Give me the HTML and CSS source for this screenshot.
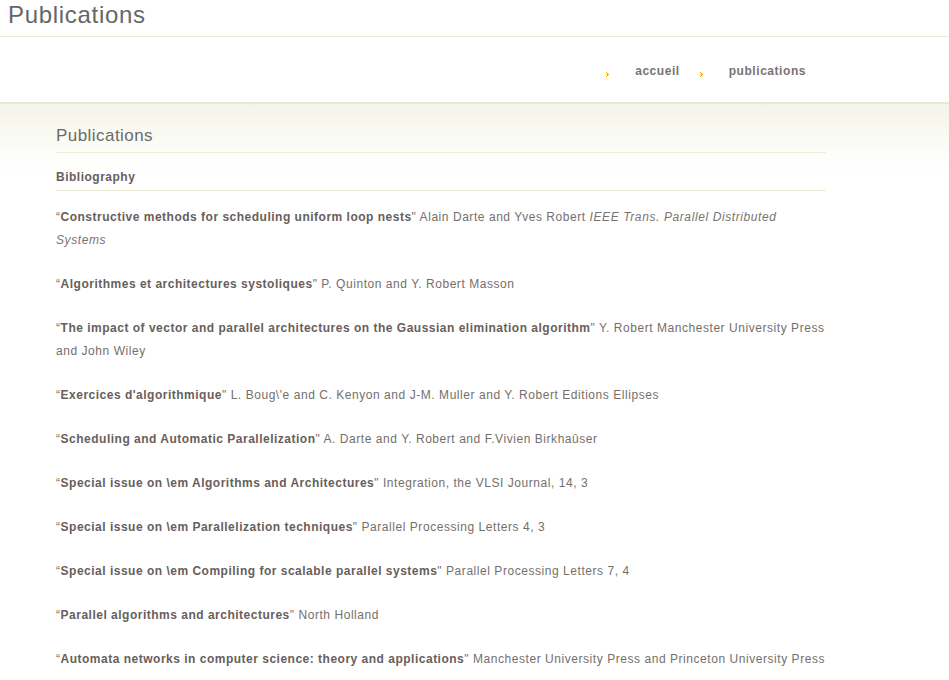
FILE: index.html
```html
<!DOCTYPE html>
<html lang="fr">
<head>
<meta charset="utf-8">
<title>Publications</title>
<link rel="stylesheet" href="styles.css">
</head>
<body>
<header class="site-header">
  <h1 class="site-title">Publications</h1>
</header>
<nav class="menu-bar">
  <ul class="menu">
    <li class="menu-item"><svg class="bullet" width="3" height="5" viewBox="0 0 3 5" shape-rendering="crispEdges"><path d="M0 0h1v1h1v1h1v1h-1v1h-1v1h-1v-1h1v-1h-1v-1h1v-1h-1z" fill="#f5a800"/><path d="M0 2h1v1h-1z" fill="#fcd870"/></svg><a href="#" class="menu-link">accueil</a></li>
    <li class="menu-item"><svg class="bullet" width="3" height="5" viewBox="0 0 3 5" shape-rendering="crispEdges"><path d="M0 0h1v1h1v1h1v1h-1v1h-1v1h-1v-1h1v-1h-1v-1h1v-1h-1z" fill="#f5a800"/><path d="M0 2h1v1h-1z" fill="#fcd870"/></svg><a href="#" class="menu-link">publications</a></li>
  </ul>
</nav>
<main class="main">
  <div class="content">
    <h2 class="page-title">Publications</h2>
    <h3 class="section-title">Bibliography</h3>
    <p class="entry">“<b>Constructive methods for scheduling uniform loop nests</b>" Alain Darte and Yves Robert <i>IEEE Trans. Parallel Distributed Systems</i></p>
    <p class="entry">“<b>Algorithmes et architectures systoliques</b>" P. Quinton and Y. Robert Masson</p>
    <p class="entry">“<b>The impact of vector and parallel architectures on the Gaussian elimination algorithm</b>" Y. Robert Manchester University Press and John Wiley</p>
    <p class="entry">“<b>Exercices d'algorithmique</b>" L. Boug\'e and C. Kenyon and J-M. Muller and Y. Robert Editions Ellipses</p>
    <p class="entry">“<b>Scheduling and Automatic Parallelization</b>" A. Darte and Y. Robert and F.Vivien Birkhaûser</p>
    <p class="entry">“<b>Special issue on \em Algorithms and Architectures</b>" Integration, the VLSI Journal, 14, 3</p>
    <p class="entry">“<b>Special issue on \em Parallelization techniques</b>" Parallel Processing Letters 4, 3</p>
    <p class="entry">“<b>Special issue on \em Compiling for scalable parallel systems</b>" Parallel Processing Letters 7, 4</p>
    <p class="entry">“<b>Parallel algorithms and architectures</b>" North Holland</p>
    <p class="entry">“<b>Automata networks in computer science: theory and applications</b>" Manchester University Press and Princeton University Press</p>
  </div>
</main>
</body>
</html>
```

FILE: styles.css
```css
html, body {
  margin: 0;
  padding: 0;
  background: #fff;
}
body {
  font-family: "Liberation Sans", Arial, sans-serif;
  color: #756f6b;
}
.site-header {
  border-bottom: 1px solid #efead6;
  height: 36px;
}
.site-title {
  margin: 0;
  padding: 1px 8px 0;
  font-size: 24px;
  line-height: 28px;
  font-weight: normal;
  color: #666;
  letter-spacing: 0.7px;
}
.menu-bar {
  height: 65px;
  border-bottom: 2px solid #e9e7d6;
}
.menu {
  list-style: none;
  margin: 0 0 0 56px;
  padding: 0 20px 0 0;
  width: 750px;
  display: flex;
  justify-content: flex-end;
  gap: 20px;
}
.menu-item {
  display: flex;
  align-items: center;
  height: 66px;
}
.bullet {
  display: block;
  margin-right: 26px;
  margin-top: 8px;
}
.menu-link {
  font-size: 12px;
  font-weight: bold;
  color: #7a7370;
  text-decoration: none;
  letter-spacing: 0.55px;
  margin-top: 2px;
}
.main {
  background: linear-gradient(#f4f3e8 0, #fbfbf5 35px, #fff 70px);
  padding-top: 21px;
}
.content {
  width: 770px;
  margin-left: 56px;
}
.page-title {
  margin: 0;
  font-size: 17px;
  line-height: 22px;
  font-weight: normal;
  color: #6a6a6a;
  letter-spacing: 0.45px;
  padding-bottom: 5px;
  border-bottom: 1px solid #eeebd6;
}
.section-title {
  margin: 15px 0 0;
  font-size: 12px;
  line-height: 18px;
  font-weight: bold;
  color: #66605c;
  letter-spacing: 0.5px;
  padding-bottom: 4px;
  border-bottom: 1px solid #eeebd6;
}
.entry {
  margin: 15px 0 21px;
  font-size: 12px;
  line-height: 23px;
  letter-spacing: 0.55px;
}
.entry + .entry {
  margin-top: 0;
}
.entry b {
  color: #66605c;
  letter-spacing: 0.5px;
}
.entry i {
  color: #7a7470;
  letter-spacing: 0.6px;
}
```
